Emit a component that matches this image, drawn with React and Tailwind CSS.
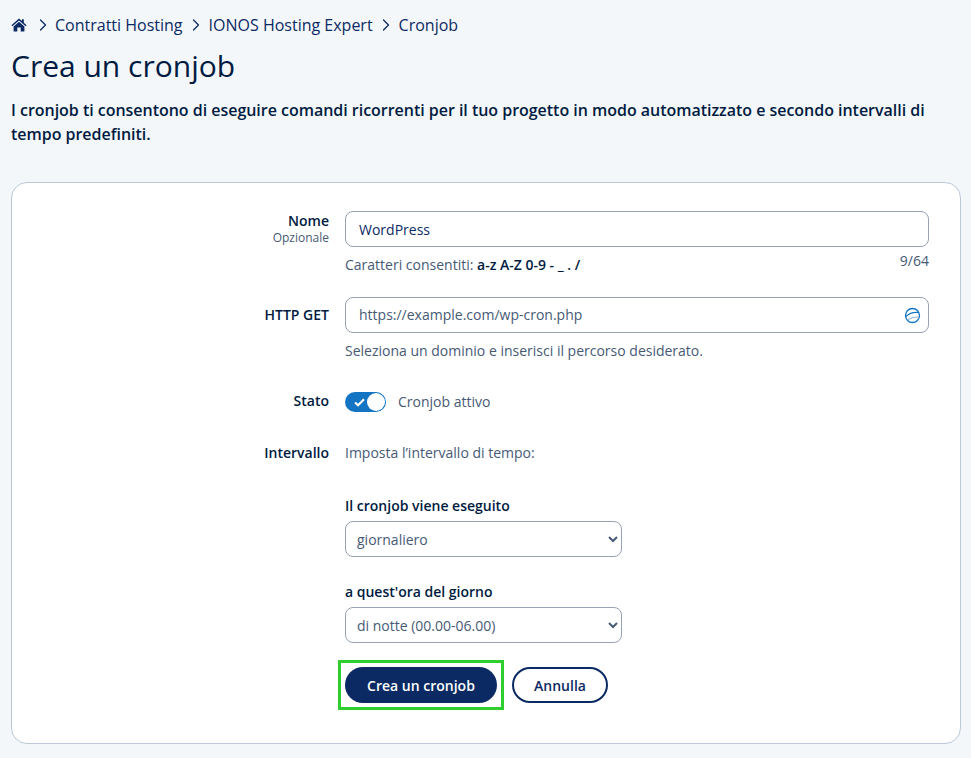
import React from "react";
import { ChevronRight } from "lucide-react";

function HomeIcon() {
    return (
        <svg viewBox="0 0 16 14" className="w-[16px] h-[14px]" fill="#0b2a63">
            <path d="M8 0.5 L0.4 7.2 L1.4 8.3 L8 2.5 L14.6 8.3 L15.6 7.2 L12.8 4.7 V1.2 H11 V3.1 Z" />
            <path d="M8 3.8 L2.6 8.5 V13.5 H6.3 V9.6 H9.7 V13.5 H13.4 V8.5 Z" />
        </svg>
    );
}

function GlobeIcon() {
    return (
        <svg viewBox="0 0 18 18" className="w-[17px] h-[17px]" fill="none" stroke="#1474c4" strokeWidth="1.4">
            <circle cx="9" cy="9" r="7.4" />
            <path d="M1.8 10.2 C6 6.4 12 5.2 16 6" />
            <path d="M3.6 13.6 C7.5 11.2 12.5 10.4 16 10.8" stroke="#8fb4d8" strokeWidth="1.1" />
        </svg>
    );
}

function Label({ children, sub }) {
    return (
        <div className="text-right">
            <div className="text-[14px] leading-[20px] font-semibold text-[#001b41]">{children}</div>
            {sub && <div className="text-[12px] leading-[14px] text-[#465a75]">{sub}</div>}
        </div>
    );
}

export default function App() {
    return (
        <div className="min-h-[758px] bg-[#f4f7fa] pl-[11px] pr-[10px] pt-[14px] pb-[14px] font-['Open_Sans',sans-serif] text-[#001b41]">
            {/* breadcrumb */}
            <div className="flex items-center h-[22px] text-[16px] text-[#0b2a63]">
                <HomeIcon />
                <ChevronRight className="w-[20px] h-[20px] ml-[6px] mr-[2px]" strokeWidth={1.5} />
                <span>Contratti Hosting</span>
                <ChevronRight className="w-[20px] h-[20px] mx-[3px]" strokeWidth={1.5} />
                <span>IONOS Hosting Expert</span>
                <ChevronRight className="w-[20px] h-[20px] mx-[3px]" strokeWidth={1.5} />
                <span>Cronjob</span>
            </div>

            <h1 className="mt-[7px] text-[30px] leading-[46px] font-normal text-[#001b41]">Crea un cronjob</h1>

            <p className="mt-[9px] pr-[8px] text-[16px] leading-[24px] font-semibold tracking-[-0.025px] text-[#001b41]">
                I cronjob ti consentono di eseguire comandi ricorrenti per il tuo progetto in modo automatizzato e secondo intervalli di tempo predefiniti.
            </p>

            {/* form card */}
            <div className="mt-[36px] h-[562px] bg-white border border-[#bcc8d8] rounded-[16px] pt-[28px] pr-[31px] grid grid-cols-[317px_584px] gap-x-[16px] content-start">
                {/* nome */}
                <div>
                    <Label sub="Opzionale">Nome</Label>
                </div>
                <div>
                    <input
                        readOnly
                        value="WordPress"
                        className="w-full h-[36px] px-[13px] text-[14px] text-[#0b2a63] bg-white border border-[#97a3b4] rounded-[8px] outline-none"
                    />
                    <div className="flex justify-between mt-[4px] h-[19px] text-[14px] leading-[19px] text-[#465a75]">
                        <span className="pt-[4px]">
                            Caratteri consentiti: <span className="font-semibold text-[#001b41]">a-z A-Z 0-9 - _ . /</span>
                        </span>
                        <span>9/64</span>
                    </div>
                </div>

                {/* http get */}
                <div className="mt-[27px] pt-[8px]">
                    <Label>HTTP GET</Label>
                </div>
                <div className="mt-[27px]">
                    <div className="relative">
                        <input
                            readOnly
                            value="https://example.com/wp-cron.php"
                            className="w-full h-[36px] px-[13px] pb-[2px] text-[14px] text-[#465a75] bg-white border border-[#97a3b4] rounded-[8px] outline-none"
                        />
                        <span className="absolute right-[8px] top-[10px]">
                            <GlobeIcon />
                        </span>
                    </div>
                    <div className="mt-[8px] text-[14px] leading-[19px] text-[#465a75]">
                        Seleziona un dominio e inserisci il percorso desiderato.
                    </div>
                </div>

                {/* stato */}
                <div className="mt-[31px]">
                    <Label>Stato</Label>
                </div>
                <div className="mt-[31px] flex items-center h-[20px] text-[14px] text-[#465a75]">
                    <span className="relative mt-[2px] w-[41px] h-[20px] rounded-full bg-[#1474c4] flex items-center pl-[9px]">
                        <svg viewBox="0 0 12 10" className="w-[11px] h-[9px]" fill="none" stroke="white" strokeWidth="2.4">
                            <path d="M1 5 L4.4 8 L11 1.5" />
                        </svg>
                        <span className="absolute right-[1px] top-[1px] w-[18px] h-[18px] rounded-full bg-white"></span>
                    </span>
                    <span className="ml-[12px]">Cronjob attivo</span>
                </div>

                {/* intervallo */}
                <div className="mt-[32px]">
                    <Label>Intervallo</Label>
                </div>
                <div className="mt-[32px]">
                    <div className="text-[14px] leading-[20px] text-[#465a75]">Imposta l’intervallo di tempo:</div>

                    <div className="mt-[33px] text-[14px] leading-[20px] font-semibold text-[#001b41]">Il cronjob viene eseguito</div>
                    <select className="block mt-[5px] w-[277px] h-[36px] pl-[7px] pr-[4px] text-[14px] text-[#465a75] bg-white border border-[#97a3b4] rounded-[8px] outline-none">
                        <option>giornaliero</option>
                    </select>

                    <div className="mt-[25px] text-[14px] leading-[20px] font-semibold text-[#001b41]">a quest'ora del giorno</div>
                    <select className="block mt-[5px] w-[277px] h-[36px] pl-[7px] pr-[4px] text-[14px] text-[#465a75] bg-white border border-[#97a3b4] rounded-[8px] outline-none">
                        <option>di notte (00.00-06.00)</option>
                    </select>

                    <div className="mt-[24px] flex items-center gap-[15px]">
                        {/* green highlight box around the primary button */}
                        <div className="-m-[7px] border-[3px] border-[#2fce2f] p-[4px]">
                            <button className="block w-[152px] h-[36px] rounded-full bg-[#0b2a63] text-white text-[14px] font-semibold">
                                Crea un cronjob
                            </button>
                        </div>
                        <button className="w-[96px] h-[36px] rounded-full bg-white border-2 border-[#0b2a63] text-[#0b2a63] text-[14px] font-semibold">
                            Annulla
                        </button>
                    </div>
                </div>
            </div>
        </div>
    );
}
